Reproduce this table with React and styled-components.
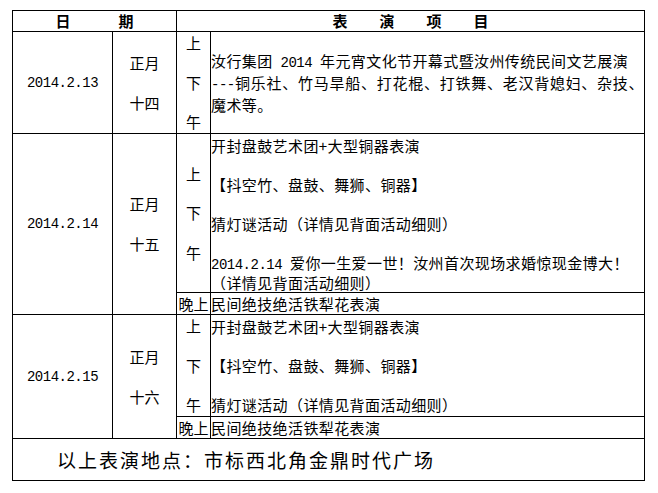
import React from "react";
import styled, { createGlobalStyle } from "styled-components";

const GlobalStyle = createGlobalStyle`
  body {
    margin: 0;
    background: #fff;
    color: #000;
    font-family: "Noto Sans CJK SC", "Noto Sans", sans-serif;
  }
`;

const days = [
  {
    date: "2014.2.13",
    lunar: ["正月", "十四"],
    rows: "2 / 3",
    center: true,
    lines: [
      "汝行集团 2014 年元宵文化节开幕式暨汝州传统民间文艺展演",
      { text: "---铜乐社、竹马旱船、打花棍、打铁舞、老汉背媳妇、杂技、", spread: true },
      "魔术等。",
    ],
  },
  {
    date: "2014.2.14",
    lunar: ["正月", "十五"],
    rows: "3 / 5",
    evening: "民间绝技绝活铁犁花表演",
    lines: [
      "开封盘鼓艺术团+大型铜器表演",
      "",
      "【抖空竹、盘鼓、舞狮、铜器】",
      "",
      "猜灯谜活动（详情见背面活动细则）",
      "",
      "2014.2.14 爱你一生爱一世！汝州首次现场求婚惊现金博大！",
      "（详情见背面活动细则）",
    ],
  },
  {
    date: "2014.2.15",
    lunar: ["正月", "十六"],
    rows: "5 / 7",
    evening: "民间绝技绝活铁犁花表演",
    lines: [
      "开封盘鼓艺术团+大型铜器表演",
      "",
      "【抖空竹、盘鼓、舞狮、铜器】",
      "",
      "猜灯谜活动（详情见背面活动细则）",
    ],
  },
];

function withNumbers(text) {
  return text.split(/( ?\d[\d.]* ?|-{2,})/).map((part, i) =>
    /\d|--/.test(part) ? <Num key={i}>{part}</Num> : part
  );
}

function App() {
  return (
    <Page>
      <GlobalStyle />
      <Table>
        <HeadCell $col="1 / 3">
          <Spread $width={78}>
            <span>日</span>
            <span>期</span>
          </Spread>
        </HeadCell>
        <HeadCell $col="3 / 5">
          <Spread $width={156}>
            <span>表</span>
            <span>演</span>
            <span>项</span>
            <span>目</span>
          </Spread>
        </HeadCell>

        {days.map((day) => {
          const first = parseInt(day.rows, 10);
          return (
            <React.Fragment key={day.date}>
              <DateCell $row={day.rows}>
                <Num>{day.date}</Num>
              </DateCell>
              <LunarCell $row={day.rows}>
                {day.lunar.map((l) => (
                  <span key={l}>{l}</span>
                ))}
              </LunarCell>
              <PeriodCell $row={`${first} / ${first + 1}`}>
                <span>上</span>
                <span>下</span>
                <span>午</span>
              </PeriodCell>
              <ContentCell $row={`${first} / ${first + 1}`} $center={day.center}>
                {day.lines.map((line, i) => {
                  const text = typeof line === "string" ? line : line.text;
                  return (
                    <Line key={i} $spread={line.spread}>
                      {withNumbers(text)}
                    </Line>
                  );
                })}
              </ContentCell>
              {day.evening && (
                <>
                  <EveningLabel $row={`${first + 1} / ${first + 2}`}>晚上</EveningLabel>
                  <EveningCell $row={`${first + 1} / ${first + 2}`}>
                    {day.evening}
                  </EveningCell>
                </>
              )}
            </React.Fragment>
          );
        })}

        <FooterCell>以上表演地点：市标西北角金鼎时代广场</FooterCell>
      </Table>
    </Page>
  );
}

export default App;

const Page = styled.div`
  padding: 10px 0 0 12px;
`;

const Table = styled.div`
  display: grid;
  grid-template-columns: 100px 64px 34px 434px;
  grid-template-rows: 21px 102px 159px 22px 102px 22px 42px;
  width: 633px;
  box-sizing: border-box;
  border-top: 1px solid #000;
  border-left: 1px solid #000;
`;

const Cell = styled.div`
  box-sizing: border-box;
  border-right: 1px solid #000;
  border-bottom: 1px solid #000;
  grid-row: ${(p) => p.$row || "auto"};
  grid-column: ${(p) => p.$col || "auto"};
  display: flex;
  flex-direction: column;
  justify-content: center;
  align-items: center;
  font-size: 15px;
  min-width: 0;
`;

const HeadCell = styled(Cell)`
  grid-row: 1 / 2;
  font-weight: 700;
  line-height: 20px;
`;

const Spread = styled.div`
  display: flex;
  justify-content: space-between;
  width: ${(p) => p.$width}px;
`;

const Num = styled.span`
  font-family: "Liberation Mono", monospace;
  font-size: 14px;
  letter-spacing: -0.5px;
  white-space: pre;
`;

const DateCell = styled(Cell)`
  grid-column: 1 / 2;
  line-height: 20px;
`;

const LunarCell = styled(Cell)`
  grid-column: 2 / 3;
  gap: 20px;
  line-height: 20px;
`;

const PeriodCell = styled(Cell)`
  grid-column: 3 / 4;
  gap: 20px;
  line-height: 19.5px;
`;

const ContentCell = styled(Cell)`
  grid-column: 4 / 5;
  align-items: stretch;
  justify-content: ${(p) => (p.$center ? "center" : "flex-start")};
  padding-top: ${(p) => (p.$center ? "0" : "1.5px")};
  line-height: ${(p) => (p.$center ? "20px" : "19.5px")};
  letter-spacing: 0.4px;
`;

const Line = styled.div`
  min-height: 19.5px;
  white-space: nowrap;
  text-align: ${(p) => (p.$spread ? "justify" : "left")};
  text-align-last: ${(p) => (p.$spread ? "justify" : "left")};
  ${(p) => p.$spread && "white-space: normal;"}
`;

const EveningLabel = styled(Cell)`
  grid-column: 3 / 4;
  line-height: 20px;
  white-space: nowrap;
`;

const EveningCell = styled(Cell)`
  grid-column: 4 / 5;
  align-items: flex-start;
  line-height: 20px;
  letter-spacing: 0.4px;
`;

const FooterCell = styled(Cell)`
  grid-row: 7 / 8;
  grid-column: 1 / 5;
  align-items: flex-start;
  padding-left: 44px;
  font-size: 19px;
  letter-spacing: 2px;
  line-height: 24px;
`;
